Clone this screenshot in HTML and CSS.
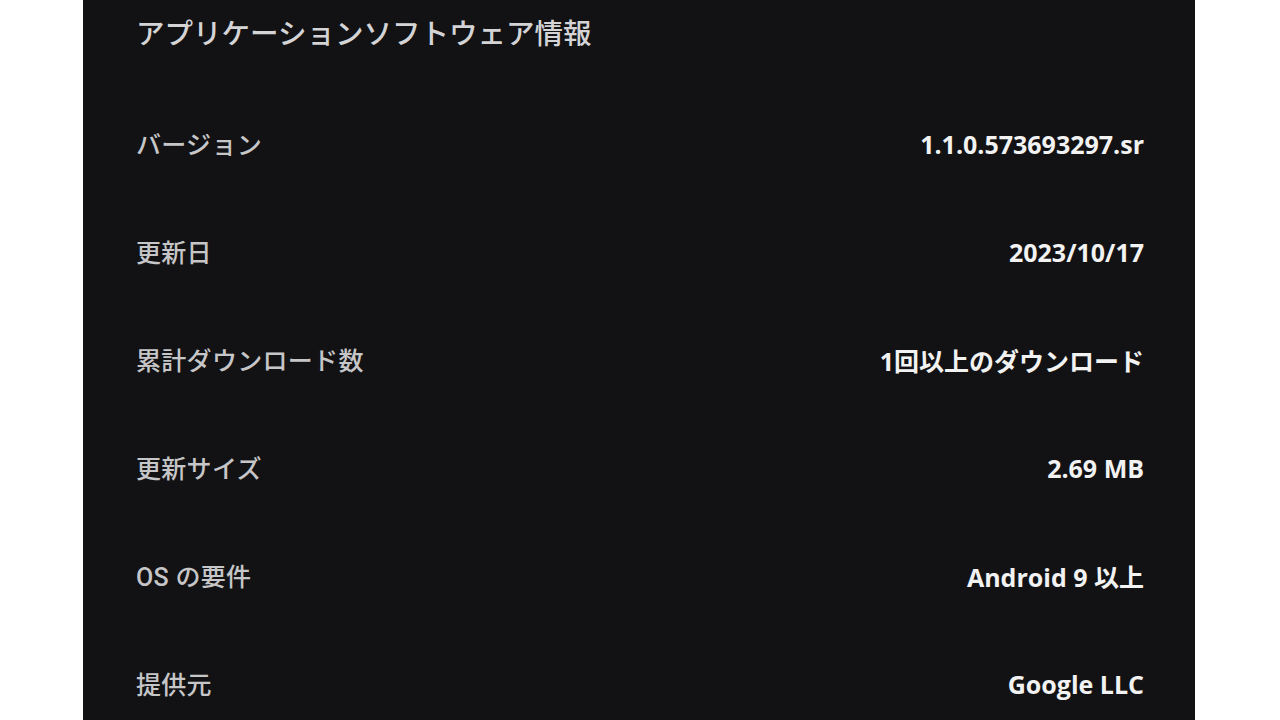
FILE: index.html
```html
<!DOCTYPE html>
<html lang="ja">
    <head>
        <meta charset="utf-8">
        <title>アプリケーションソフトウェア情報</title>
        <link rel="stylesheet" href="styles.css">
    </head>
    <body>
        <div id="InfoPanel">
            <h1 class="InfoTitle">アプリケーションソフトウェア情報</h1>
            <div class="InfoRow">
                <span class="InfoLabel">バージョン</span>
                <span class="InfoValue">1.1.0.573693297.sr</span>
            </div>
            <div class="InfoRow">
                <span class="InfoLabel">更新日</span>
                <span class="InfoValue">2023/10/17</span>
            </div>
            <div class="InfoRow">
                <span class="InfoLabel">累計ダウンロード数</span>
                <span class="InfoValue">1回以上のダウンロード</span>
            </div>
            <div class="InfoRow">
                <span class="InfoLabel">更新サイズ</span>
                <span class="InfoValue">2.69 MB</span>
            </div>
            <div class="InfoRow">
                <span class="InfoLabel">OS の要件</span>
                <span class="InfoValue">Android 9 以上</span>
            </div>
            <div class="InfoRow">
                <span class="InfoLabel">提供元</span>
                <span class="InfoValue">Google LLC</span>
            </div>
        </div>
    </body>
</html>
```

FILE: styles.css
```css
body{
    margin: 0;
    background-color: white;
    height: 720px;
    overflow: hidden;
}

#InfoPanel{
    width: 1112px;
    height: 720px;
    margin-left: 83px;
    box-sizing: border-box;
    padding: 15px 51px 0 53px;
    background-color: #121214;
    font-family: Roboto, "Noto Sans CJK JP", sans-serif;
    display: flex;
    flex-direction: column;
}

.InfoTitle{
    margin: 0 0 34px 0;
    font-size: 28.5px;
    line-height: 40px;
    font-weight: 500;
    color: #d4d4d6;
}

.InfoRow{
    height: 108px;
    flex-shrink: 0;
    display: flex;
    justify-content: space-between;
    align-items: center;
}

.InfoLabel{
    font-size: 25px;
    font-weight: 500;
    color: #c6c6c8;
    letter-spacing: 0.3px;
}

.InfoValue{
    font-family: "Open Sans", "Noto Sans CJK JP", sans-serif;
    font-size: 25px;
    font-weight: 700;
    color: #f2f2f2;
    margin-top: 2px;
}
```
